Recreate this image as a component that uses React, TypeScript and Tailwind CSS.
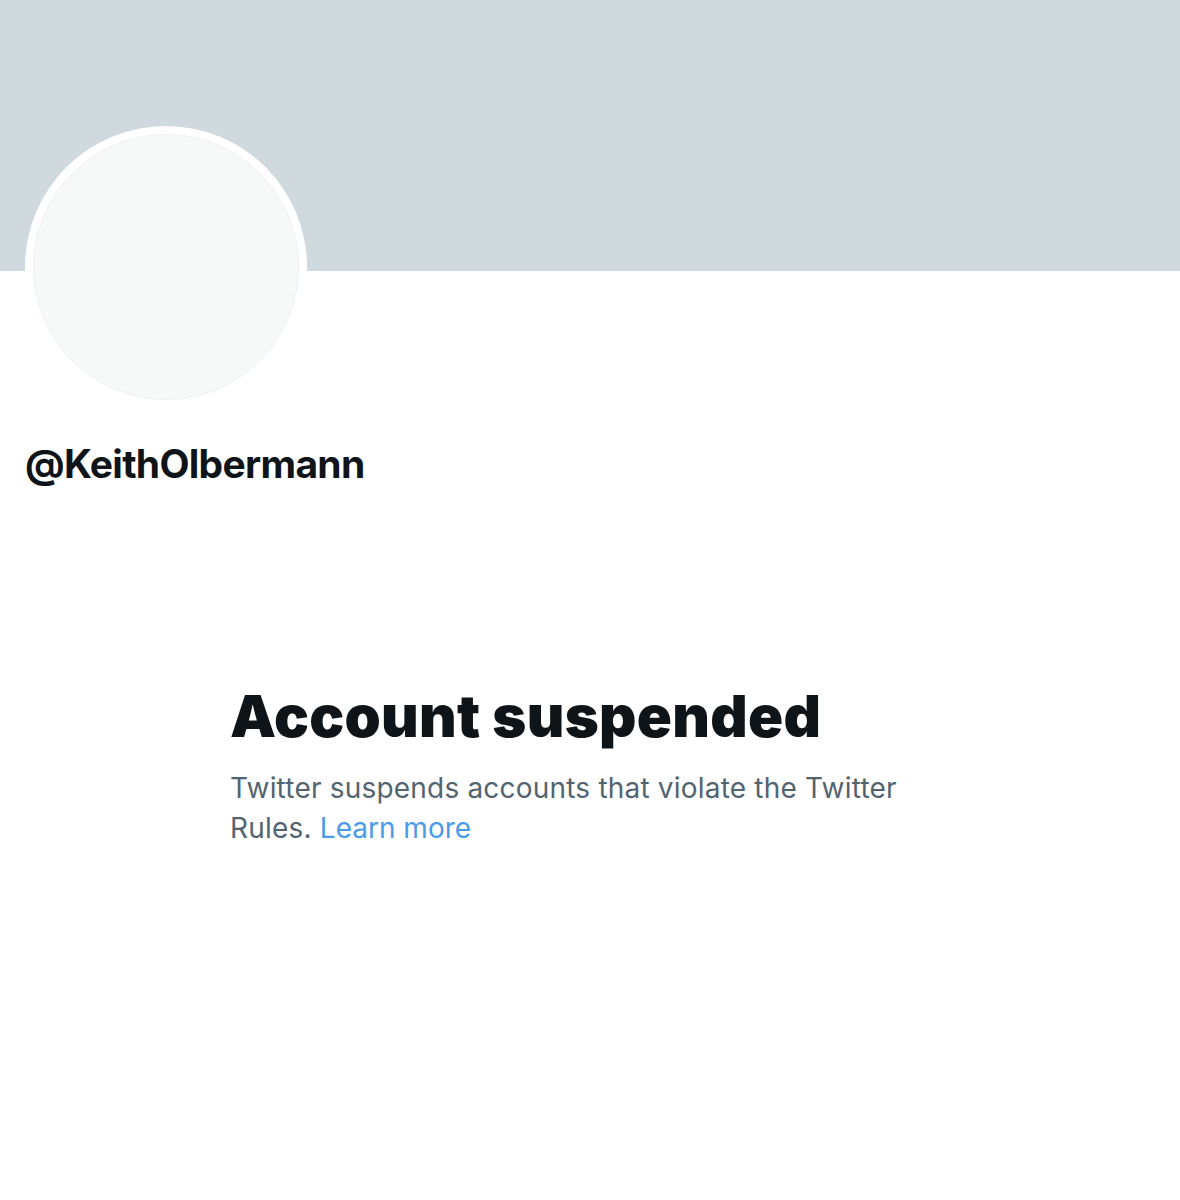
import React from "react";

const App: React.FC = () => {
  return (
    <div className="w-[1180px] h-[1200px] bg-white font-['Inter','Liberation_Sans',sans-serif]">
      <div className="h-[271px] bg-[#cfd9de]" />
      <div className="-mt-[145px] ml-[25px] w-[282px] h-[282px] rounded-full bg-white p-[8px]">
        <div className="w-full h-full rounded-full bg-[#f7f9f9] border border-[#eef1f2]" />
      </div>
      <h2 className="mt-[32px] ml-[25px] text-[39px] leading-[48px] font-bold text-[#0f1419] tracking-[-0.7px]">
        @KeithOlbermann
      </h2>
      <div className="mt-[194px] ml-[230px] w-[690px]">
        <h1 className="text-[58px] leading-[68px] font-black text-[#0f1419] tracking-[0.3px]">
          Account suspended
        </h1>
        <p className="mt-[18px] text-[28px] leading-[40px] text-[#536471] tracking-[0.2px]">
          Twitter suspends accounts that violate the Twitter Rules.{" "}
          <a href="#" className="text-[#4a9be8] tracking-[0px]">
            Learn more
          </a>
        </p>
      </div>
    </div>
  );
};

export default App;
